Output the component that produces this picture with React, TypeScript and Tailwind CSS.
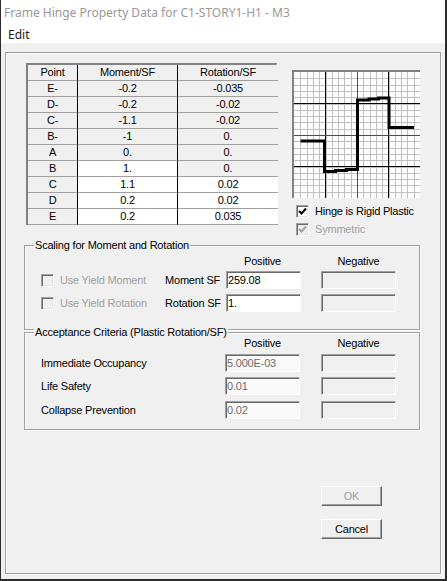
import type { ReactNode } from "react";

type Row = { point: string; moment: string; rotation: string; mEdit: boolean; rEdit: boolean };

const rows: Row[] = [
  { point: "E-", moment: "-0.2", rotation: "-0.035", mEdit: false, rEdit: false },
  { point: "D-", moment: "-0.2", rotation: "-0.02", mEdit: false, rEdit: false },
  { point: "C-", moment: "-1.1", rotation: "-0.02", mEdit: false, rEdit: false },
  { point: "B-", moment: "-1", rotation: "0.", mEdit: false, rEdit: false },
  { point: "A", moment: "0.", rotation: "0.", mEdit: false, rEdit: false },
  { point: "B", moment: "1.", rotation: "0.", mEdit: true, rEdit: false },
  { point: "C", moment: "1.1", rotation: "0.02", mEdit: true, rEdit: true },
  { point: "D", moment: "0.2", rotation: "0.02", mEdit: true, rEdit: true },
  { point: "E", moment: "0.2", rotation: "0.035", mEdit: true, rEdit: true },
];

const font = "font-['Liberation_Sans',Arial,sans-serif] text-[11px] leading-[13px] tracking-[-0.2px]";

function Check({ checked, disabled }: { checked: boolean; disabled?: boolean }) {
  return (
    <span
      className={`flex h-[13px] w-[13px] shrink-0 items-center justify-center border border-t-[#a0a0a0] border-l-[#a0a0a0] border-r-white border-b-white shadow-[inset_1px_1px_0_#696969,inset_-1px_-1px_0_#e3e3e3] ${
        disabled ? "bg-[#f0f0f0]" : "bg-white"
      }`}
    >
      {checked && (
        <svg width="9" height="9" viewBox="0 0 9 9">
          <path
            d="M1 4 L3.5 6.5 L8 1.5"
            fill="none"
            stroke={disabled ? "#a0a0a0" : "#000"}
            strokeWidth="2"
          />
        </svg>
      )}
    </span>
  );
}

function Field({ value, tone }: { value?: string; tone: "white" | "soft" | "off" }) {
  const bg = tone === "white" ? "bg-white text-black" : tone === "soft" ? "bg-[#f9f9f9] text-[#6d6d6d]" : "bg-[#f0f0f0]";
  return (
    <div
      className={`flex h-[18px] w-[75px] items-center border border-t-[#a0a0a0] border-l-[#a0a0a0] border-r-white border-b-white pl-[1px] shadow-[inset_1px_1px_0_#696969] ${bg}`}
    >
      {value}
    </div>
  );
}

function Group({ title, className, children }: { title: string; className: string; children: ReactNode }) {
  return (
    <div
      className={`relative ml-[18px] w-[396px] border border-[#a0a0a0] shadow-[inset_1px_1px_0_#fff,1px_1px_0_#fff] ${className}`}
    >
      <span className="absolute -top-[7px] left-[9px] bg-[#f0f0f0] px-[1px] leading-[13px]">{title}</span>
      {children}
    </div>
  );
}

function Btn({ label, disabled, className }: { label: string; disabled?: boolean; className: string }) {
  return (
    <div
      className={`flex h-[20px] w-[61px] items-center justify-center border border-t-white border-l-white border-r-[#696969] border-b-[#696969] bg-[#f0f0f0] shadow-[inset_-1px_-1px_0_#a0a0a0] ${
        disabled ? "text-[#a0a0a0]" : "text-black"
      } ${className}`}
    >
      {label}
    </div>
  );
}

function Chart() {
  const lines = Array.from({ length: 19 }, (_, i) => Math.round((i + 1) * 6.3) + 0.5);
  return (
    <svg width="126" height="126" viewBox="0 0 126 126" className="block bg-white">
      {lines.map((p) => (
        <g key={p} stroke="#c0c0c0" strokeWidth="1">
          <line x1={p} y1="0" x2={p} y2="126" />
          <line x1="0" y1={p} x2="126" y2={p} />
        </g>
      ))}
      <g stroke="#000" strokeWidth="1">
        <line x1="31.5" y1="0" x2="31.5" y2="126" />
        <line x1="94.5" y1="0" x2="94.5" y2="126" />
        <line x1="0" y1="31.5" x2="126" y2="31.5" />
        <line x1="0" y1="94.5" x2="126" y2="94.5" />
      </g>
      <g stroke="#ff0000" strokeWidth="1">
        <line x1="63.5" y1="0" x2="63.5" y2="126" />
        <line x1="0" y1="63.5" x2="126" y2="63.5" />
      </g>
      <path
        d="M6.5 69 L30.5 69 L30.5 99.5 L41.5 99.5 L41.5 98.5 L52.5 98.5 L52.5 97.5 L63.5 97.5 L63.5 28 L75 28 L75 27 L84.5 27 L84.5 26 L95 26 L95 55.5 L120 55.5"
        fill="none"
        stroke="#000"
        strokeWidth="3"
      />
    </svg>
  );
}

export default function App() {
  return (
    <div className={`flex h-[581px] w-[447px] flex-col border-l border-r-2 border-b-2 border-[#2b2b2b] bg-[#f0f0f0] text-black ${font}`}>
      <div className="h-[43px] bg-white font-['Segoe_UI','Noto_Sans',sans-serif] text-[12px] leading-[16px] tracking-normal">
        <div className="flex h-[25px] items-center pl-[3px] text-[#999999]">Frame Hinge Property Data for C1-STORY1-H1 - M3</div>
        <div className="flex h-[18px] items-center pl-[7px] pt-[2px] text-[#1a1a1a]">Edit</div>
      </div>

      <div className="mx-[4px] mt-[9px] flex h-[522px] flex-col border border-[#a0a0a0] shadow-[inset_1px_1px_0_#fff,1px_1px_0_#fff]">
        <div className="flex pl-[20px] pt-[10px]">
          <div className="grid w-[251px] grid-cols-[50px_100px_100px] self-start border-t-2 border-l-2 border-[#808080] border-r border-r-[#d4d4d4]">
            {["Point", "Moment/SF", "Rotation/SF"].map((h, i) => (
              <div
                key={h}
                className={`flex h-[16px] items-center justify-center border-b border-b-[#a0a0a0] bg-[#f0f0f0] leading-none ${
                  i < 2 ? "border-r border-r-black" : ""
                }`}
              >
                {h}
              </div>
            ))}
            {rows.map((r) => (
              <div key={r.point} className="contents">
                <div className="flex h-[16px] items-center justify-center border-b border-r border-b-[#a0a0a0] border-r-black bg-[#f0f0f0] leading-none">
                  {r.point}
                </div>
                <div
                  className={`flex h-[16px] items-center justify-center border-b border-r border-b-[#a0a0a0] border-r-black leading-none ${
                    r.mEdit ? "bg-white" : "bg-[#f0f0f0]"
                  }`}
                >
                  {r.moment}
                </div>
                <div
                  className={`flex h-[16px] items-center justify-center border-b border-b-[#a0a0a0] leading-none ${
                    r.rEdit ? "bg-white" : "bg-[#f0f0f0]"
                  }`}
                >
                  {r.rotation}
                </div>
              </div>
            ))}
          </div>

          <div className="ml-[15px] mt-[7px] flex flex-col">
            <div className="w-[128px] border-t-2 border-l-2 border-[#808080]">
              <Chart />
            </div>
            <div className="ml-[4px] mt-[7px] flex items-center gap-[6px]">
              <Check checked />
              <span>Hinge is Rigid Plastic</span>
            </div>
            <div className="ml-[4px] mt-[5px] flex items-center gap-[6px] text-[#a0a0a0]">
              <Check checked disabled />
              <span>Symmetric</span>
            </div>
          </div>
        </div>

        <Group title="Scaling for Moment and Rotation" className="mt-[9px] h-[85px]">
          <div className="flex pl-[200px] pt-[9px]">
            <div className="w-[75px] text-center">Positive</div>
            <div className="ml-[21px] w-[75px] text-center">Negative</div>
          </div>
          <div className="mt-[3px] flex items-center pl-[16px]">
            <div className="flex w-[124px] items-center gap-[6px] text-[#a0a0a0]">
              <Check checked={false} disabled />
              <span>Use Yield Moment</span>
            </div>
            <div className="w-[61px]">Moment SF</div>
            <Field value="259.08" tone="white" />
            <div className="ml-[20px]">
              <Field tone="off" />
            </div>
          </div>
          <div className="mt-[5px] flex items-center pl-[16px]">
            <div className="flex w-[124px] items-center gap-[6px] text-[#a0a0a0]">
              <Check checked={false} disabled />
              <span>Use Yield Rotation</span>
            </div>
            <div className="w-[61px]">Rotation SF</div>
            <Field value="1." tone="white" />
            <div className="ml-[20px]">
              <Field tone="off" />
            </div>
          </div>
        </Group>

        <Group title="Acceptance Criteria (Plastic Rotation/SF)" className="mt-[2px] h-[98px]">
          <div className="flex pl-[200px] pt-[4px]">
            <div className="w-[75px] text-center">Positive</div>
            <div className="ml-[21px] w-[75px] text-center">Negative</div>
          </div>
          {[
            ["Immediate Occupancy", "5.000E-03", "mt-[4px]"],
            ["Life Safety", "0.01", "mt-[5px]"],
            ["Collapse Prevention", "0.02", "mt-[6px]"],
          ].map(([label, v, mt]) => (
            <div key={label} className={`flex items-center pl-[16px] ${mt}`}>
              <div className="w-[184px]">{label}</div>
              <Field value={v} tone="soft" />
              <div className="ml-[21px]">
                <Field tone="off" />
              </div>
            </div>
          ))}
        </Group>

        <Btn label="OK" disabled className="ml-[315px] mt-[56px]" />
        <Btn label="Cancel" className="ml-[315px] mt-[13px]" />
      </div>
    </div>
  );
}
